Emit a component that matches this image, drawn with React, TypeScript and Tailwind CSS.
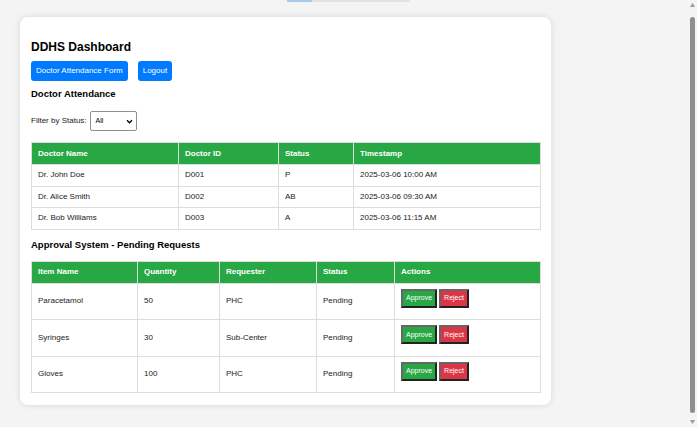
import React from "react";

const doctors = [
  { name: "Dr. John Doe", id: "D001", status: "P", time: "2025-03-06 10:00 AM" },
  { name: "Dr. Alice Smith", id: "D002", status: "AB", time: "2025-03-06 09:30 AM" },
  { name: "Dr. Bob Williams", id: "D003", status: "A", time: "2025-03-06 11:15 AM" },
];

const requests = [
  { item: "Paracetamol", qty: "50", by: "PHC", status: "Pending" },
  { item: "Syringes", qty: "30", by: "Sub-Center", status: "Pending" },
  { item: "Gloves", qty: "100", by: "PHC", status: "Pending" },
];

const th = "border border-[#dddddd] px-[6px] text-left font-bold";
const td = "border border-[#dddddd] px-[6px]";
const actionBtn =
  "h-[19px] border-2 border-b-[#222] border-l-[#666] border-r-[#222] border-t-[#666] px-[3px] text-[7px] text-white";

export default function App() {
  return (
    <div
      className="min-h-[427px] bg-[#f4f4f4] text-[8px] text-[#222] antialiased"
      style={{ fontFamily: '"Liberation Sans", Arial, sans-serif' }}
    >
      {/* bit of something scrolled off the top */}
      <div className="ml-[287px] flex h-[2px] w-[123px] bg-[#e2e2e2]">
        <div className="w-[25px] bg-[#a9c9ea]" />
      </div>

      <div className="ml-[20px] mt-[15px] w-[531px] rounded-[8px] bg-white px-[11px] pb-[12px] pt-[23px] shadow-[0_0_6px_rgba(0,0,0,0.12)]">
        <h2 className="text-[12px] font-bold leading-[14px] text-black">DDHS Dashboard</h2>

        <div className="mt-[7px] flex gap-[10px]">
          <button className="h-[20px] rounded-[3px] bg-[#007bff] px-[5px] text-[8px] text-white">
            Doctor Attendance Form
          </button>
          <button className="h-[20px] rounded-[3px] bg-[#007bff] px-[5px] text-[8px] text-white">
            Logout
          </button>
        </div>

        <h3 className="mt-[7px] text-[9.5px] font-bold leading-[12px] text-black">Doctor Attendance</h3>

        <div className="mt-[11px] flex items-center gap-[3px]">
          <span>Filter by Status:</span>
          <div className="flex h-[20px] w-[47px] items-center justify-between rounded-[2px] border border-[#8f8f8f] pl-[5px] pr-[3px] text-[7px] text-black">
            <span>All</span>
            <svg width="7" height="5" viewBox="0 0 8 6">
              <path d="M1 1.5 L4 4.5 L7 1.5" fill="none" stroke="#000" strokeWidth="1.6" />
            </svg>
          </div>
        </div>

        <table className="mt-[11px] w-[510px] table-fixed border-collapse">
          <colgroup>
            <col className="w-[147px]" />
            <col className="w-[100px]" />
            <col className="w-[75px]" />
            <col />
          </colgroup>
          <thead>
            <tr className="h-[22px] bg-[#28a745] text-white">
              <th className={th}>Doctor Name</th>
              <th className={th}>Doctor ID</th>
              <th className={th}>Status</th>
              <th className={th}>Timestamp</th>
            </tr>
          </thead>
          <tbody>
            {doctors.map((d) => (
              <tr key={d.id} className="h-[21.5px]">
                <td className={td}>{d.name}</td>
                <td className={td}>{d.id}</td>
                <td className={td}>{d.status}</td>
                <td className={td}>{d.time}</td>
              </tr>
            ))}
          </tbody>
        </table>

        <h3 className="mt-[9px] text-[9.5px] font-bold leading-[12px] text-black">
          Approval System - Pending Requests
        </h3>

        <table className="mt-[10px] w-[510px] table-fixed border-collapse">
          <colgroup>
            <col className="w-[106px]" />
            <col className="w-[82px]" />
            <col className="w-[97px]" />
            <col className="w-[78px]" />
            <col />
          </colgroup>
          <thead>
            <tr className="h-[22px] bg-[#28a745] text-white">
              <th className={th}>Item Name</th>
              <th className={th}>Quantity</th>
              <th className={th}>Requester</th>
              <th className={th}>Status</th>
              <th className={th}>Actions</th>
            </tr>
          </thead>
          <tbody>
            {requests.map((r) => (
              <tr key={r.item} className="h-[36.5px]">
                <td className={td}>{r.item}</td>
                <td className={td}>{r.qty}</td>
                <td className={td}>{r.by}</td>
                <td className={td}>{r.status}</td>
                <td className={`${td} pb-[6px]`}>
                  <div className="flex gap-[2px]">
                    <button className={`${actionBtn} bg-[#28a745]`}>Approve</button>
                    <button className={`${actionBtn} bg-[#dc3545]`}>Reject</button>
                  </div>
                </td>
              </tr>
            ))}
          </tbody>
        </table>
      </div>

      {/* window scrollbar */}
      <div className="fixed right-0 top-0 h-[427px] w-[9px] bg-[#f4f4f4]">
        <svg className="absolute left-[2px] top-[3px]" width="5" height="4" viewBox="0 0 5 4">
          <path d="M0 4 L2.5 0 L5 4 Z" fill="#9a9a9a" />
        </svg>
        <div className="absolute left-[2px] top-[17px] h-[396px] w-[5px] rounded-full bg-[#8f8f8f]" />
        <svg className="absolute bottom-[3px] left-[2px]" width="5" height="4" viewBox="0 0 5 4">
          <path d="M0 0 L2.5 4 L5 0 Z" fill="#9a9a9a" />
        </svg>
      </div>
    </div>
  );
}
